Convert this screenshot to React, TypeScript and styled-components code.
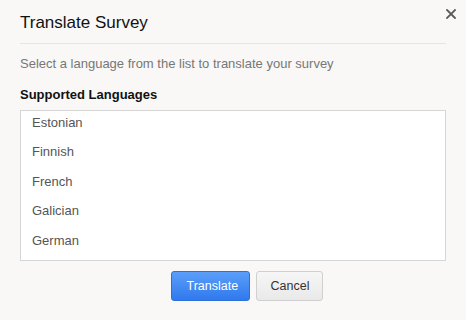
import React from 'react'
import styled, { createGlobalStyle } from 'styled-components'

const GlobalStyle = createGlobalStyle`
html, body {
  margin: 0;
  padding: 0;
  background: #f9f8f6;
  font-family: "Liberation Sans", Arial, sans-serif;
}
`

const Dialog = styled.div`
  width: 466px;
  height: 320px;
  box-sizing: border-box;
  background: #f9f8f6;
  position: relative;
  padding: 0 20px;
  display: flex;
  flex-direction: column;
`

const Header = styled.div`
  height: 43px;
  border-bottom: 1px solid #e6e5e3;
  display: flex;
  align-items: flex-start;
`

const Title = styled.h2`
  margin: 13px 0 0;
  font-size: 17px;
  font-weight: normal;
  color: #111;
  line-height: 20px;
`

const Close = styled.button`
  position: absolute;
  top: 8px;
  right: 9px;
  width: 12px;
  height: 12px;
  padding: 0;
  border: none;
  background: transparent;
  cursor: pointer;
  display: flex;
  align-items: center;
  justify-content: center;
`

const Hint = styled.p`
  margin: 12px 0 0;
  font-size: 13px;
  color: #777;
  line-height: 16px;
`

const Label = styled.div`
  margin-top: 15px;
  font-size: 13px;
  font-weight: bold;
  color: #111;
  line-height: 16px;
`

const List = styled.ul`
  margin: 7px 0 0;
  padding: 0;
  list-style: none;
  height: 151px;
  box-sizing: border-box;
  background: #fff;
  border: 1px solid #d6d6d6;
  overflow: hidden;
`

const Item = styled.li`
  padding: 3.5px 11px 10px;
  line-height: 16px;
  font-size: 13px;
  color: #555;
`

const Actions = styled.div`
  display: flex;
  justify-content: center;
  gap: 6px;
  margin-top: 10px;
  padding-left: 27px;
`

const Button = styled.button<{ $primary?: boolean }>`
  height: 30px;
  box-sizing: border-box;
  padding: 0 ${p => (p.$primary ? '15px' : '14px')};
  border-radius: 3px;
  font-family: "Liberation Sans", Arial, sans-serif;
  font-size: 12.5px;
  cursor: pointer;
  color: ${p => (p.$primary ? '#fff' : '#333')};
  border: 1px solid ${p => (p.$primary ? '#2e6fd8' : '#d0d0d0')};
  background: ${p =>
    p.$primary
      ? 'linear-gradient(to bottom, #5b9ef9, #3079ee)'
      : 'linear-gradient(to bottom, #f6f6f6, #e9e9e9)'};
  width: ${p => (p.$primary ? '79px' : '67px')};
`

const languages = ['Estonian', 'Finnish', 'French', 'Galician', 'German']

export default function App() {
  return (
    <>
      <GlobalStyle />
      <Dialog>
        <Header>
          <Title>Translate Survey</Title>
        </Header>
        <Close aria-label="close">
          <svg width="10" height="10" viewBox="0 0 10 10">
            <path d="M1 1L9 9M9 1L1 9" stroke="#5a5a5a" strokeWidth="1.8" strokeLinecap="square" />
          </svg>
        </Close>
        <Hint>Select a language from the list to translate your survey</Hint>
        <Label>Supported Languages</Label>
        <List>
          {languages.map(l => (
            <Item key={l}>{l}</Item>
          ))}
        </List>
        <Actions>
          <Button $primary>Translate</Button>
          <Button>Cancel</Button>
        </Actions>
      </Dialog>
    </>
  )
}
